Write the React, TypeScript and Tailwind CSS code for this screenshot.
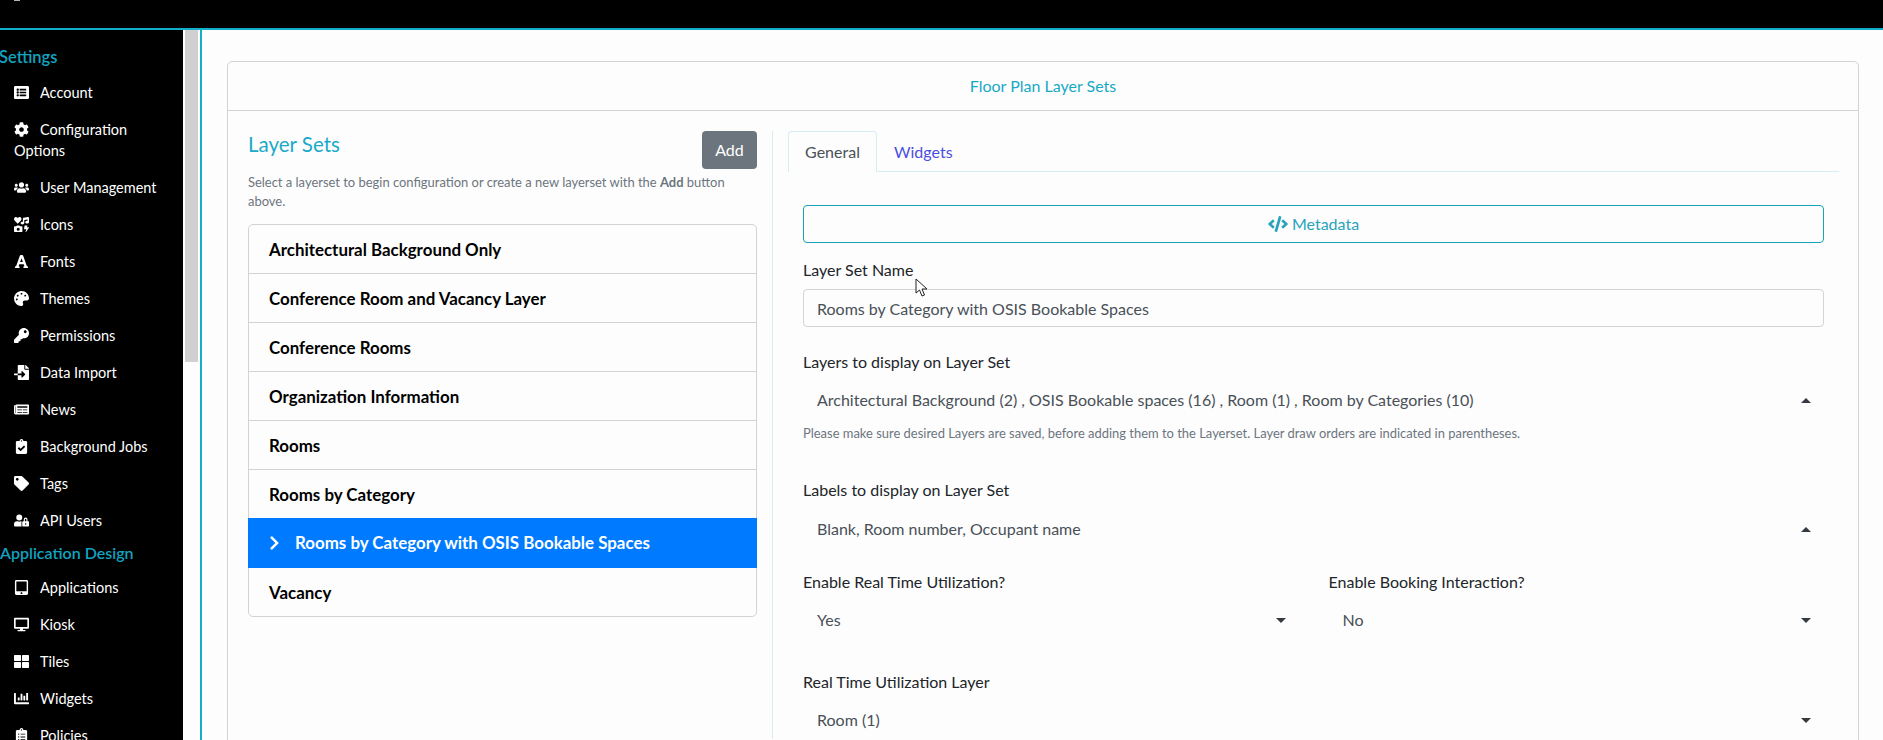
import {
  FaListAlt,
  FaCog,
  FaUsers,
  FaIcons,
  FaFont,
  FaPalette,
  FaKey,
  FaFileImport,
  FaNewspaper,
  FaClipboardCheck,
  FaTag,
  FaUserLock,
  FaTabletAlt,
  FaDesktop,
  FaThLarge,
  FaChartBar,
  FaClipboardList,
  FaCode,
  FaChevronRight,
} from 'react-icons/fa';
import type { ComponentType } from 'react';

type NavItem = { icon: ComponentType<{ className?: string }>; label: string };

const settingsNav: NavItem[] = [
  { icon: FaListAlt, label: 'Account' },
  { icon: FaCog, label: 'Configuration Options' },
  { icon: FaUsers, label: 'User Management' },
  { icon: FaIcons, label: 'Icons' },
  { icon: FaFont, label: 'Fonts' },
  { icon: FaPalette, label: 'Themes' },
  { icon: FaKey, label: 'Permissions' },
  { icon: FaFileImport, label: 'Data Import' },
  { icon: FaNewspaper, label: 'News' },
  { icon: FaClipboardCheck, label: 'Background Jobs' },
  { icon: FaTag, label: 'Tags' },
  { icon: FaUserLock, label: 'API Users' },
];

const designNav: NavItem[] = [
  { icon: FaTabletAlt, label: 'Applications' },
  { icon: FaDesktop, label: 'Kiosk' },
  { icon: FaThLarge, label: 'Tiles' },
  { icon: FaChartBar, label: 'Widgets' },
  { icon: FaClipboardList, label: 'Policies' },
];

const layerSets = [
  'Architectural Background Only',
  'Conference Room and Vacancy Layer',
  'Conference Rooms',
  'Organization Information',
  'Rooms',
  'Rooms by Category',
  'Rooms by Category with OSIS Bookable Spaces',
  'Vacancy',
];

function SideLink({ item }: { item: NavItem }) {
  const Icon = item.icon;
  return (
    <a className="block pl-[14px] pr-2 py-[8px] text-[14.5px] leading-[21px] text-white">
      <span className="inline-block w-[26px] align-[-2px]">
        <Icon className="h-[15px] w-auto" />
      </span>
      {item.label}
    </a>
  );
}

function Caret({ up }: { up?: boolean }) {
  return (
    <svg width="10" height="5" viewBox="0 0 10 5" className={up ? 'rotate-180' : ''}>
      <path d="M0 0h10L5 5z" fill="#343a40" />
    </svg>
  );
}

function SelectBox({ value, up }: { value: string; up?: boolean }) {
  return (
    <div className="flex items-center justify-between h-[38px] pl-[14px] pr-[13px] text-[16px] text-[#495057]">
      <span>{value}</span>
      <Caret up={up} />
    </div>
  );
}

function FieldLabel({ text, className }: { text: string; className?: string }) {
  return <div className={`h-[20px] leading-[18px] text-[16px] text-[#212529] ${className ?? ''}`}>{text}</div>;
}

export default function App() {
  return (
    <div className="h-screen overflow-hidden flex flex-col bg-[#fdfdfd] font-['Lato',sans-serif]">
      <header className="h-[30px] shrink-0 bg-black border-b-2 border-[#12aecb]">
        <div className="ml-[14px] w-[6px] h-px bg-white/70" />
      </header>

      <div className="flex flex-1 min-h-0">
        <aside className="w-[183px] shrink-0 bg-black overflow-hidden">
          <h6 className="mt-[16px] h-[22px] leading-[22px] text-[16.5px] font-semibold text-[#11a3c0] -ml-px">Settings</h6>
          <nav className="mt-[6px]">
            {settingsNav.map((item) => (
              <SideLink key={item.label} item={item} />
            ))}
          </nav>
          <h6 className="mt-[3px] h-[22px] leading-[22px] text-[16px] font-semibold text-[#11a3c0] whitespace-nowrap">Application Design</h6>
          <nav className="mt-[5px]">
            {designNav.map((item) => (
              <SideLink key={item.label} item={item} />
            ))}
          </nav>
        </aside>

        {/* scrollbar */}
        <div className="w-[17px] shrink-0 pl-[2px]">
          <div className="w-[13px] h-[332px] bg-[#d0d0d0]" />
        </div>

        <main className="flex-1 min-w-0 border-l-2 border-[#12aecb] pl-[25px] pr-[24px] pt-[31px]">
          <section className="border border-[#d3d3d3] rounded-[5px] h-[800px]">
            <div className="h-[49px] flex items-center justify-center border-b border-[#d3d3d3] text-[16px] text-[#17a9c6]">
              Floor Plan Layer Sets
            </div>

            <div className="flex pt-[20px]">
              {/* left column */}
              <div className="w-[544px] shrink-0 pl-[20px] pr-[15px]">
                <div className="flex justify-between items-start h-[38px]">
                  <h4 className="text-[20.5px] leading-[26px] text-[#1ba9c9]">Layer Sets</h4>
                  <button className="w-[55px] h-[38px] rounded-[4px] bg-[#6c757d] text-white text-[16px]">Add</button>
                </div>
                <p className="mt-[4px] text-[12.95px] leading-[19px] text-[#6c757d]">
                  Select a layerset to begin configuration or create a new layerset with the <b>Add</b> button above.
                </p>
                <ul className="mt-[13px] border border-[#d3d3d3] rounded-[5px] bg-[#fdfdfd]">
                  {layerSets.map((name, i) => {
                    const active = i === 6;
                    return (
                      <li
                        key={name}
                        className={
                          active
                            ? '-mx-px -mt-px h-[50px] flex items-center pl-[21px] bg-[#007bff] text-white font-bold text-[16.9px]'
                            : `${i === 7 ? 'h-[48px]' : 'h-[49px]'} flex items-center pl-[20px] pt-px text-black font-bold text-[16.9px] ${i < 5 ? 'border-b border-[#d3d3d3]' : ''}`
                        }
                      >
                        {active && <FaChevronRight className="w-[11px] h-[16px] mr-[15px]" />}
                        {name}
                      </li>
                    );
                  })}
                </ul>
              </div>

              {/* right column */}
              <div className="flex-1 min-w-0 border-l border-[#d5eef3] pl-[15px] pr-[19px]">
                <div className="flex h-[41px] border-b border-[#d5eef3] text-[16px]">
                  <div className="w-[89px] h-[41px] flex items-center justify-center border border-b-0 border-[#d5eef3] rounded-t-[4px] bg-[#fdfdfd] text-[#495057]">
                    General
                  </div>
                  <div className="ml-[17px] h-[41px] flex items-center text-[#4a4fe0]">Widgets</div>
                </div>

                <div className="px-[15px]">
                  <button className="mt-[33px] w-full h-[38px] flex items-center justify-center gap-[4px] border border-[#17a2b8] rounded-[4px] text-[#2aa3ba] text-[16px]">
                    <FaCode className="w-[20px] h-[16px]" />
                    Metadata
                  </button>

                  <div className="relative">
                    <FieldLabel text="Layer Set Name" className="mt-[18px]" />
                    {/* mouse pointer in the capture */}
                    <svg width="13" height="19" viewBox="0 0 13 19" className="absolute left-[112px] top-[17px]">
                      <path d="M1 1v14l3.5-3 2.5 6 2.5-1-2.5-6H12z" fill="#fff" stroke="#222" strokeWidth="1" />
                    </svg>
                  </div>
                  <div className="mt-[8px] h-[38px] flex items-center pl-[13px] pt-px border border-[#d3d3d8] rounded-[4px] text-[16px] text-[#495057]">
                    Rooms by Category with OSIS Bookable Spaces
                  </div>

                  <FieldLabel text="Layers to display on Layer Set" className="mt-[26px]" />
                  <div className="mt-[8px]">
                    <SelectBox up value="Architectural Background (2) , OSIS Bookable spaces (16) , Room (1) , Room by Categories (10)" />
                  </div>
                  <p className="mt-[5px] h-[18px] leading-[18px] text-[12.95px] text-[#6c757d]">
                    Please make sure desired Layers are saved, before adding them to the Layerset. Layer draw orders are indicated in parentheses.
                  </p>

                  <FieldLabel text="Labels to display on Layer Set" className="mt-[39px]" />
                  <div className="mt-[9px]">
                    <SelectBox up value="Blank, Room number, Occupant name" />
                  </div>

                  <div className="mt-[25px] grid grid-cols-2 gap-x-[30px]">
                    <div>
                      <FieldLabel text="Enable Real Time Utilization?" />
                      <div className="mt-[8px]">
                        <SelectBox value="Yes" />
                      </div>
                    </div>
                    <div>
                      <FieldLabel text="Enable Booking Interaction?" />
                      <div className="mt-[8px]">
                        <SelectBox value="No" />
                      </div>
                    </div>
                  </div>

                  <FieldLabel text="Real Time Utilization Layer" className="mt-[34px]" />
                  <div className="mt-[8px]">
                    <SelectBox value="Room (1)" />
                  </div>
                </div>
              </div>
            </div>
          </section>
        </main>
      </div>
    </div>
  );
}
